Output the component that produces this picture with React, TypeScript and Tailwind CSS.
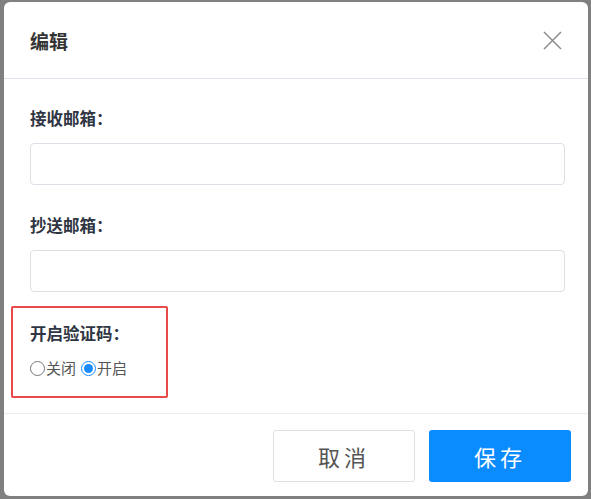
import { useState } from 'react';

function Radio({ checked, label, onClick }: { checked: boolean; label: string; onClick: () => void }) {
  return (
    <label className="flex cursor-pointer items-center" onClick={onClick}>
      <span
        className={[
          'flex h-[15px] w-[15px] items-center justify-center rounded-full border',
          checked ? 'border-[#1a8cff]' : 'border-[#767676]',
        ].join(' ')}
      >
        {checked && <span className="h-[9px] w-[9px] rounded-full bg-[#1a8cff]" />}
      </span>
      <span className="ml-[1px] text-[15px] leading-[20px] text-[#555]">{label}</span>
    </label>
  );
}

export default function App() {
  const [captcha, setCaptcha] = useState(true);

  return (
    <div
      className="h-[499px] w-[591px] overflow-hidden bg-[#808080] pl-[4px] pt-[2px]"
      style={{ fontFamily: '"Noto Sans CJK SC", "Noto Sans", sans-serif' }}
    >
      <div className="flex h-[494px] w-[584px] flex-col rounded-[6px] bg-white">
        <div className="flex h-[77px] shrink-0 items-center justify-between border-b border-[#dde3ea] pl-[26px] pr-[26px]">
          <h2 className="pt-[1px] text-[19px] font-bold leading-[24px] text-[#333]">编辑</h2>
          <button type="button" className="flex h-[20px] w-[20px] items-center justify-center text-[#8c8c8c]">
            <svg width="19" height="19" viewBox="0 0 19 19" fill="none" stroke="currentColor" strokeWidth="1.5">
              <path d="M1 1L18 18M18 1L1 18" />
            </svg>
          </button>
        </div>

        <div className="flex flex-1 flex-col px-[26px]">
          <label className="mt-[27px] text-[16.5px] font-bold leading-[24px] text-[#2f3542]">接收邮箱：</label>
          <input className="mt-[13px] h-[42px] w-[535px] rounded-[4px] border border-[#dcdfe6] px-3 text-[14px] outline-none" />

          <label className="mt-[28px] text-[16.5px] font-bold leading-[24px] text-[#2f3542]">抄送邮箱：</label>
          <input className="mt-[13px] h-[42px] w-[535px] rounded-[4px] border border-[#dcdfe6] px-3 text-[14px] outline-none" />

          <div className="-ml-[19px] mt-[14px] h-[92px] w-[157px] rounded-[2px] border-2 border-[#e84a4a] pl-[17px] pt-[13px]">
            <div className="text-[16.5px] font-bold leading-[24px] text-[#2f3542]">开启验证码：</div>
            <div className="mt-[13px] flex items-center gap-[5px]">
              <Radio checked={!captcha} label="关闭" onClick={() => setCaptcha(false)} />
              <Radio checked={captcha} label="开启" onClick={() => setCaptcha(true)} />
            </div>
          </div>
        </div>

        <div className="flex h-[83px] shrink-0 items-start justify-end gap-[14px] border-t border-[#ececec] pr-[17px] pt-[16px]">
          <button
            type="button"
            className="h-[52px] w-[142px] rounded-[3px] border border-[#dcdfe6] bg-white text-[22px] tracking-[4px] text-[#555]"
          >
            取消
          </button>
          <button
            type="button"
            className="h-[52px] w-[142px] rounded-[3px] bg-[#0a8cff] text-[22px] tracking-[4px] text-white"
          >
            保存
          </button>
        </div>
      </div>
    </div>
  );
}
